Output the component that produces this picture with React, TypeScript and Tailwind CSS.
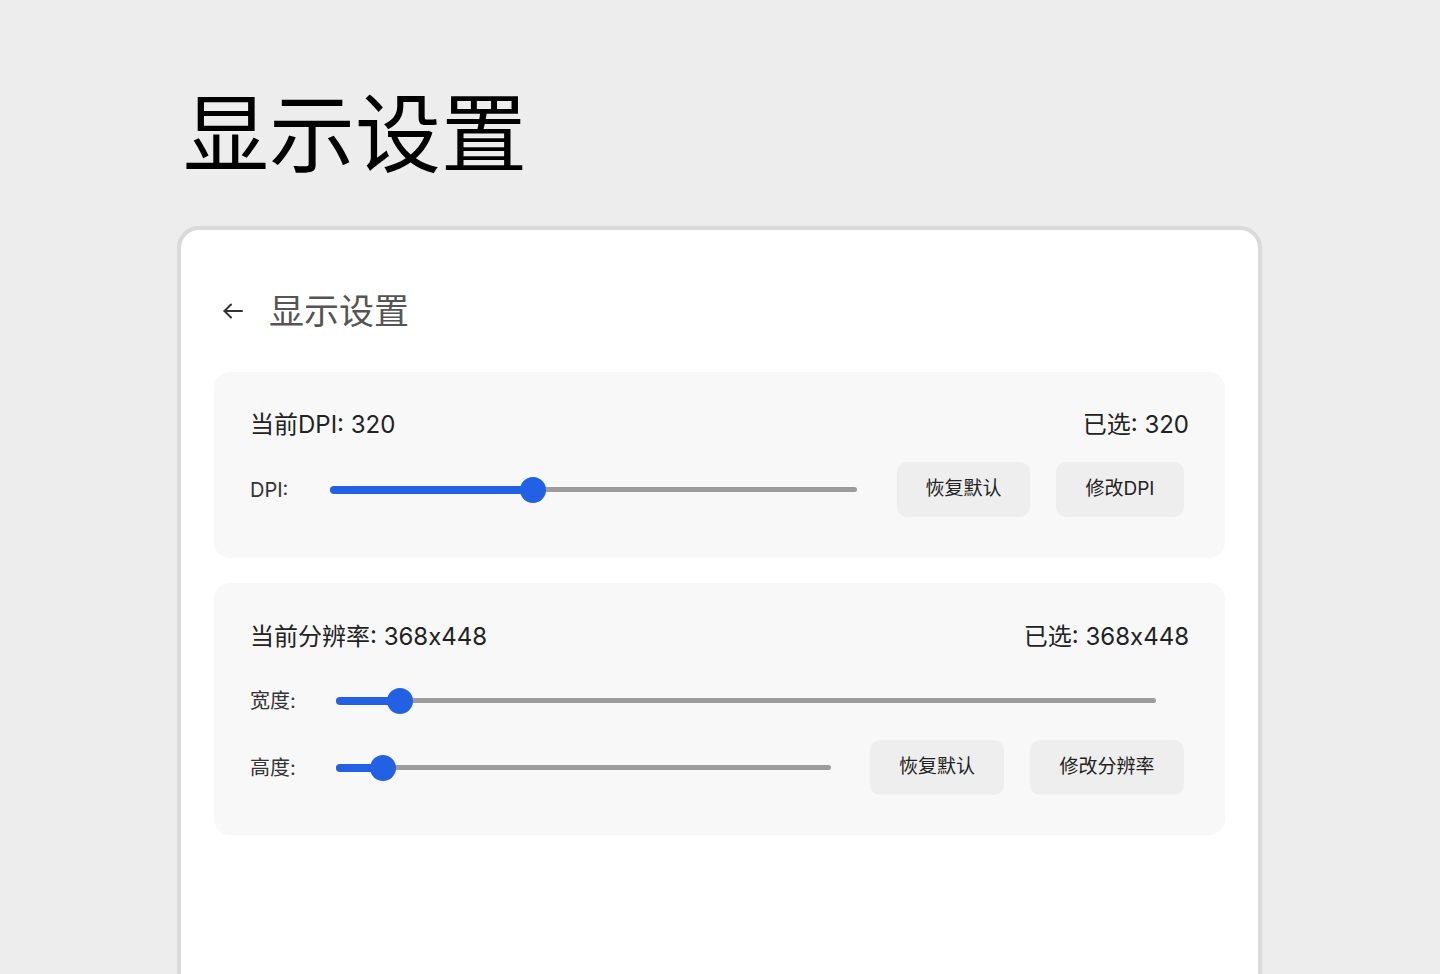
import React from "react";

const font = { fontFamily: 'Inter, "Noto Sans CJK SC", sans-serif' };

const Slider = ({ pct }: { pct: number }) => (
  <div className="relative flex-1 h-[26px] flex items-center">
    {/* gray rail */}
    <div className="w-full h-[5px] rounded-full bg-[#9c9c9c]" />
    {/* blue fill */}
    <div
      className="absolute left-0 top-1/2 -translate-y-1/2 h-[8px] rounded-full bg-[#2261e3]"
      style={{ width: `${pct}%` }}
    />
    {/* thumb */}
    <div
      className="absolute top-1/2 -translate-x-1/2 -translate-y-1/2 w-[26px] h-[26px] rounded-full bg-[#2261e3]"
      style={{ left: `${pct}%` }}
    />
  </div>
);

const Btn = ({ children, className }: { children: React.ReactNode; className: string }) => (
  <button
    className={`h-[55px] rounded-[10px] bg-[#eeeeee] text-[19px] text-[#222] whitespace-nowrap flex items-center justify-center ${className}`}
  >
    {children}
  </button>
);

export default function App() {
  return (
    <div className="h-screen overflow-hidden bg-[#ededed]" style={font}>
      <div className="pl-[177px] pt-[92px] w-[1262px]">
        <h1 className="pl-[6px] text-[86px] leading-none text-black">显示设置</h1>

        <div className="mt-[48px] h-[800px] rounded-[22px] border-4 border-[#dadada] bg-white px-[33px]">
          {/* header */}
          <div className="flex items-center h-[48px] mt-[57px] pl-[9px] gap-[26px]">
            <svg width="20" height="16" viewBox="0 0 20 16" fill="none" stroke="#333" strokeWidth="2" strokeLinecap="round" strokeLinejoin="round">
              <path d="M19 8H1.5" />
              <path d="M8 1.5 1.5 8 8 14.5" />
            </svg>
            <span className="text-[35px] text-[#555]">显示设置</span>
          </div>

          {/* DPI panel */}
          <div className="mt-[37px] rounded-2xl bg-[#f8f8f8] px-9 pt-[37px] pb-[41px]">
            <div className="flex justify-between text-[24px] leading-8 text-[#222]">
              <span>当前DPI: 320</span>
              <span>已选: 320</span>
            </div>
            <div className="mt-[21px] flex items-center h-[55px] pr-[5px]">
              <span className="w-[80px] shrink-0 text-[20px] text-[#333]">DPI:</span>
              <Slider pct={38.5} />
              <div className="ml-[40px] flex gap-[26px]">
                <Btn className="w-[133px]">恢复默认</Btn>
                <Btn className="w-[128px]">修改DPI</Btn>
              </div>
            </div>
          </div>

          {/* resolution panel */}
          <div className="mt-[25px] rounded-2xl bg-[#f8f8f8] px-9 pt-[38px] pb-[40px]">
            <div className="flex justify-between text-[24px] leading-8 text-[#222]">
              <span>当前分辨率: 368x448</span>
              <span>已选: 368x448</span>
            </div>
            <div className="mt-[20px] flex items-center h-[55px] pr-[33px]">
              <span className="w-[86px] shrink-0 text-[20px] text-[#333]">宽度:</span>
              <Slider pct={7.8} />
            </div>
            <div className="mt-[12px] flex items-center h-[55px] pr-[5px]">
              <span className="w-[86px] shrink-0 text-[20px] text-[#333]">高度:</span>
              <Slider pct={9.5} />
              <div className="ml-[39px] flex gap-[26px]">
                <Btn className="w-[134px]">恢复默认</Btn>
                <Btn className="w-[154px]">修改分辨率</Btn>
              </div>
            </div>
          </div>
        </div>
      </div>
    </div>
  );
}
